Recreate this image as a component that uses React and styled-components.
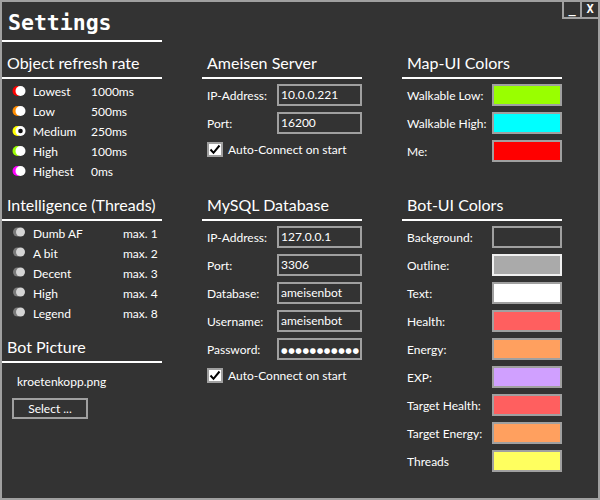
import React from 'react';
import styled, { createGlobalStyle } from 'styled-components';

const Global = createGlobalStyle`
  body {
    margin: 0;
    background: #333333;
    font-family: Lato, "Noto Sans", sans-serif;
  }
`;

const Window = styled.div`
  position: relative;
  width: 600px;
  height: 500px;
  box-sizing: border-box;
  border: 2px solid #a0a0a0;
  background: #333333;
  color: #ffffff;
  overflow: hidden;
`;

const WindowButtons = styled.div`
  position: absolute;
  top: 0;
  right: 0;
  display: flex;
  border-bottom: 2px solid #a0a0a0;
`;

const WinButton = styled.div`
  width: 16px;
  height: 15px;
  border-left: 2px solid #a0a0a0;
  display: flex;
  align-items: center;
  justify-content: center;
  font-family: "DejaVu Sans Mono", monospace;
  font-weight: bold;
  font-size: 12px;
  line-height: 15px;
  color: #ffffff;
`;

const Layout = styled.div`
  display: grid;
  grid-template-columns: repeat(3, 160px);
  column-gap: 40px;
  row-gap: 3px;
  align-items: start;
`;

const Title = styled.h1`
  grid-column: 1 / -1;
  width: 160px;
  margin: 0;
  padding: 4px 0 0 6px;
  box-sizing: border-box;
  height: 40px;
  line-height: 34px;
  border-bottom: 2px solid #ffffff;
  font-family: "DejaVu Sans Mono", monospace;
  font-weight: bold;
  font-size: 21.5px;
`;

const Column = styled.div`
  display: flex;
  flex-direction: column;
  gap: 3px;
`;

const Section = styled.section`
  display: flex;
  flex-direction: column;
`;

const Header = styled.h2`
  margin: 0;
  padding: 6px 0 3px 5px;
  line-height: 23px;
  font-size: 16px;
  font-weight: normal;
  white-space: nowrap;
  border-bottom: 2px solid #ffffff;
`;

const List = styled.div`
  padding: 2px 0 3px;
`;

const OptionRow = styled.div`
  display: grid;
  grid-template-columns: 31px ${p => p.$labelWidth}px auto;
  align-items: center;
  height: 20px;
  font-size: 12px;
`;

const RadioBox = styled.span`
  display: flex;
  padding-left: 10px;
`;

const Form = styled.div`
  padding-top: 2px;
  display: flex;
  flex-direction: column;
`;

const FieldRow = styled.div`
  display: flex;
  align-items: center;
  justify-content: space-between;
  height: 28px;
  padding-left: 5px;
  font-size: 12px;
`;

const Field = styled.div`
  width: 85px;
  height: 22px;
  box-sizing: border-box;
  border: 2px solid #a0a0a0;
  padding: 0 2px;
  line-height: 18px;
  font-size: 12px;
  white-space: nowrap;
  overflow: hidden;
`;

const Dots = styled.span`
  font-family: "DejaVu Sans", sans-serif;
  font-size: 7.5px;
  letter-spacing: 0.6px;
`;

const Swatch = styled.div`
  width: 70px;
  height: 22px;
  box-sizing: border-box;
  border: 2px solid ${p => p.$border || '#a0a0a0'};
  background: ${p => p.$color};
`;

const CheckRow = styled.label`
  display: flex;
  align-items: center;
  gap: 5px;
  height: 24px;
  padding-left: 5px;
  font-size: 12px;
`;

const CheckBox = styled.span`
  width: 16px;
  height: 15px;
  box-sizing: border-box;
  border: 2px solid #a0a0a0;
  background: #ffffff;
  display: flex;
  align-items: center;
  justify-content: center;
`;

const FileName = styled.div`
  margin-top: 9px;
  padding-left: 15px;
  line-height: 20px;
  font-size: 12px;
`;

const SelectButton = styled.button`
  margin: 6px 0 0 10px;
  width: 76px;
  height: 21px;
  box-sizing: border-box;
  border: 2px solid #a0a0a0;
  background: transparent;
  color: #ffffff;
  font-family: inherit;
  font-size: 12px;
  padding: 0;
  line-height: 17px;
`;

const Radio = ({ color, light = '#ffffff', selected, dim }) => (
  <svg width="16" height="12" viewBox="0 0 16 12">
    <circle cx="5.5" cy={dim ? 5 : 6} r={dim ? 4.5 : 5} fill={color} />
    <circle cx="8.5" cy={dim ? 5 : 6} r={dim ? 4.5 : 5} fill={light} />
    {selected && <circle cx="8.5" cy="6" r="2.3" fill="#111111" />}
  </svg>
);

const Check = () => (
  <svg width="12" height="11" viewBox="0 0 12 11">
    <path d="M1.5 5.5 L4.5 8.8 L10.5 1.5" fill="none" stroke="#000000" strokeWidth="2" />
  </svg>
);

const refreshRates = [
  ['Lowest', '1000ms', '#ff0000'],
  ['Low', '500ms', '#ff8c00'],
  ['Medium', '250ms', '#ffff00', true],
  ['High', '100ms', '#99ff00'],
  ['Highest', '0ms', '#ff00ff'],
];

const threads = [
  ['Dumb AF', 'max. 1'],
  ['A bit', 'max. 2'],
  ['Decent', 'max. 3'],
  ['High', 'max. 4'],
  ['Legend', 'max. 8'],
];

const mapColors = [
  ['Walkable Low:', '#99ff00'],
  ['Walkable High:', '#00ffff'],
  ['Me:', '#ff0000'],
];

const botColors = [
  ['Background:', '#333333'],
  ['Outline:', '#aaaaaa', '#f0f0f0'],
  ['Text:', '#ffffff'],
  ['Health:', '#ff5f5f'],
  ['Energy:', '#ffa05f'],
  ['EXP:', '#d0a0ff'],
  ['Target Health:', '#ff5f5f'],
  ['Target Energy:', '#ffa05f'],
  ['Threads', '#ffff5f'],
];

const App = () => {
  return (
    <Window>
      <Global />
      <WindowButtons>
        <WinButton>_</WinButton>
        <WinButton>X</WinButton>
      </WindowButtons>
      <Layout>
        <Title>Settings</Title>

        <Section>
          <Header>Object refresh rate</Header>
          <List>
            {refreshRates.map(([label, value, color, selected]) => (
              <OptionRow key={label} $labelWidth={58}>
                <RadioBox>
                  <Radio color={color} selected={selected} />
                </RadioBox>
                <span>{label}</span>
                <span>{value}</span>
              </OptionRow>
            ))}
          </List>
        </Section>

        <Section>
          <Header>Ameisen Server</Header>
          <Form>
            <FieldRow>
              IP-Address:<Field>10.0.0.221</Field>
            </FieldRow>
            <FieldRow>
              Port:<Field>16200</Field>
            </FieldRow>
            <CheckRow>
              <CheckBox><Check /></CheckBox>
              Auto-Connect on start
            </CheckRow>
          </Form>
        </Section>

        <Section>
          <Header>Map-UI Colors</Header>
          <Form>
            {mapColors.map(([label, color]) => (
              <FieldRow key={label}>
                {label}
                <Swatch $color={color} />
              </FieldRow>
            ))}
          </Form>
        </Section>

        <Column>
          <Section>
            <Header>Intelligence (Threads)</Header>
            <List>
              {threads.map(([label, value]) => (
                <OptionRow key={label} $labelWidth={90}>
                  <RadioBox>
                    <Radio color="#7a7a7a" light="#d4d4d4" dim />
                  </RadioBox>
                  <span>{label}</span>
                  <span>{value}</span>
                </OptionRow>
              ))}
            </List>
          </Section>
          <Section>
            <Header>Bot Picture</Header>
            <FileName>kroetenkopp.png</FileName>
            <div>
              <SelectButton>Select ...</SelectButton>
            </div>
          </Section>
        </Column>

        <Section>
          <Header>MySQL Database</Header>
          <Form>
            <FieldRow>
              IP-Address:<Field>127.0.0.1</Field>
            </FieldRow>
            <FieldRow>
              Port:<Field>3306</Field>
            </FieldRow>
            <FieldRow>
              Database:<Field>ameisenbot</Field>
            </FieldRow>
            <FieldRow>
              Username:<Field>ameisenbot</Field>
            </FieldRow>
            <FieldRow>
              Password:<Field><Dots>●●●●●●●●●●●</Dots></Field>
            </FieldRow>
            <CheckRow>
              <CheckBox><Check /></CheckBox>
              Auto-Connect on start
            </CheckRow>
          </Form>
        </Section>

        <Section>
          <Header>Bot-UI Colors</Header>
          <Form>
            {botColors.map(([label, color, border]) => (
              <FieldRow key={label}>
                {label}
                <Swatch $color={color} $border={border} />
              </FieldRow>
            ))}
          </Form>
        </Section>
      </Layout>
    </Window>
  );
};

export default App;
